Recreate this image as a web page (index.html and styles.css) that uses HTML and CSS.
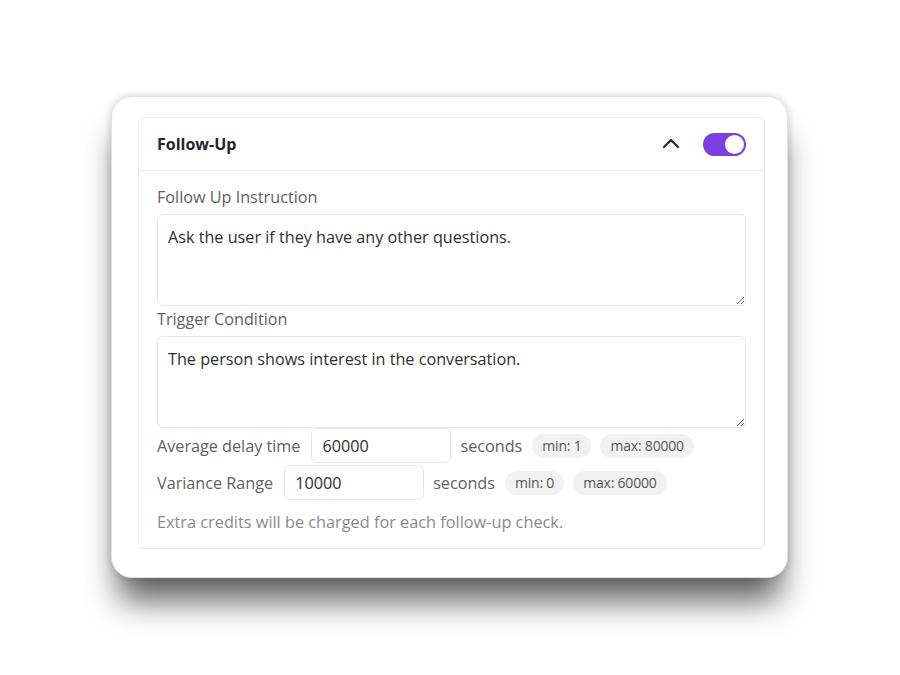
FILE: index.html
```html
<!DOCTYPE html>
<html lang="en">
<head>
<meta charset="utf-8">
<title>Follow-Up</title>
<link rel="stylesheet" href="styles.css">
</head>
<body>
<div class="stage">
  <div class="card">
    <section class="panel">
      <header class="panel-head">
        <span class="panel-title">Follow-Up</span>
        <div class="head-actions">
          <svg class="chevron" width="20" height="12" viewBox="0 0 20 12" aria-hidden="true">
            <path d="M3 10 L10 3 L17 10" fill="none" stroke="#2f2f2f" stroke-width="2.4" stroke-linecap="round" stroke-linejoin="round"/>
          </svg>
          <span class="toggle"><span class="knob"></span></span>
        </div>
      </header>
      <div class="panel-body">
        <label class="field-label">Follow Up Instruction</label>
        <textarea class="area">Ask the user if they have any other questions.</textarea>
        <label class="field-label second">Trigger Condition</label>
        <textarea class="area">The person shows interest in the conversation.</textarea>
        <div class="num-row">
          <span class="row-label">Average delay time</span>
          <input class="num" type="text" value="60000">
          <span class="unit">seconds</span>
          <span class="pill">min: 1</span>
          <span class="pill">max: 80000</span>
        </div>
        <div class="num-row">
          <span class="row-label">Variance Range</span>
          <input class="num" type="text" value="10000">
          <span class="unit">seconds</span>
          <span class="pill">min: 0</span>
          <span class="pill">max: 60000</span>
        </div>
        <p class="note">Extra credits will be charged for each follow-up check.</p>
      </div>
    </section>
  </div>
</div>
</body>
</html>
```
FILE: styles.css
```css
* { box-sizing: border-box; }
html, body { margin: 0; padding: 0; background: #ffffff; }
body {
  font-family: "Open Sans", "Noto Sans", sans-serif;
  color: #333;
  width: 900px;
  height: 675px;
  overflow: hidden;
}
.stage {
  padding: 97px 0 0 112px;
}
.card {
  width: 675px;
  height: 480px;
  background: #fff;
  border-radius: 20px;
  padding: 20px 22px 0 26px;
  box-shadow:
    0 0 0 1px #e2e2e2,
    0 0 5px 4px rgba(0, 0, 0, 0.09),
    0 30px 32px -6px rgba(0, 0, 0, 0.62);
}
.panel {
  width: 627px;
  border: 1px solid #ececec;
  border-radius: 6px;
}
.panel-head {
  height: 53px;
  border-bottom: 1px solid #ececec;
  display: flex;
  align-items: center;
  justify-content: space-between;
  padding: 0 18px 0 18px;
}
.panel-title {
  font-size: 16px;
  font-weight: 700;
  color: #262626;
}
.head-actions {
  display: flex;
  align-items: center;
  gap: 22px;
}
.chevron { display: block; margin-top: -3px; }
.toggle {
  width: 43px;
  height: 23px;
  border-radius: 12px;
  background: #7b3fe4;
  display: flex;
  align-items: center;
  justify-content: flex-end;
  padding: 0 2px;
}
.knob {
  width: 19px;
  height: 19px;
  border-radius: 50%;
  background: #fff;
}
.panel-body {
  padding: 16px 19px 16px 18px;
  display: flex;
  flex-direction: column;
}
.field-label {
  font-size: 16.2px;
  line-height: 20px;
  color: #606060;
  margin-bottom: 7px;
}
.field-label.second { margin-top: 3px; }
.area {
  width: 589px;
  height: 92px;
  border: 1px solid #e6e6e6;
  border-radius: 6px;
  padding: 11px 10px;
  font-family: inherit;
  font-size: 16.2px;
  color: #2e2e2e;
  line-height: 22px;
  resize: vertical;
  outline: none;
  background: #fff;
}
.num-row {
  display: flex;
  align-items: center;
  height: 35px;
  margin-bottom: 2px;
}
.row-label {
  font-size: 16.2px;
  color: #606060;
  margin-right: 11px;
}
.num {
  width: 140px;
  height: 35px;
  border: 1px solid #e6e6e6;
  border-radius: 6px;
  padding: 0 10px;
  font-family: inherit;
  font-size: 16.2px;
  color: #2e2e2e;
  outline: none;
  background: #fff;
}
.unit {
  font-size: 16.2px;
  color: #606060;
  margin: 0 10px 0 9px;
}
.pill {
  font-size: 14px;
  line-height: 18px;
  color: #555;
  background: #f1f1f1;
  border-radius: 12px;
  padding: 3px 10px;
  margin-right: 9px;
  letter-spacing: -0.2px;
}
.note {
  margin: 10px 0 0;
  font-size: 16.3px;
  line-height: 20px;
  color: #8a8a8a;
}
```
